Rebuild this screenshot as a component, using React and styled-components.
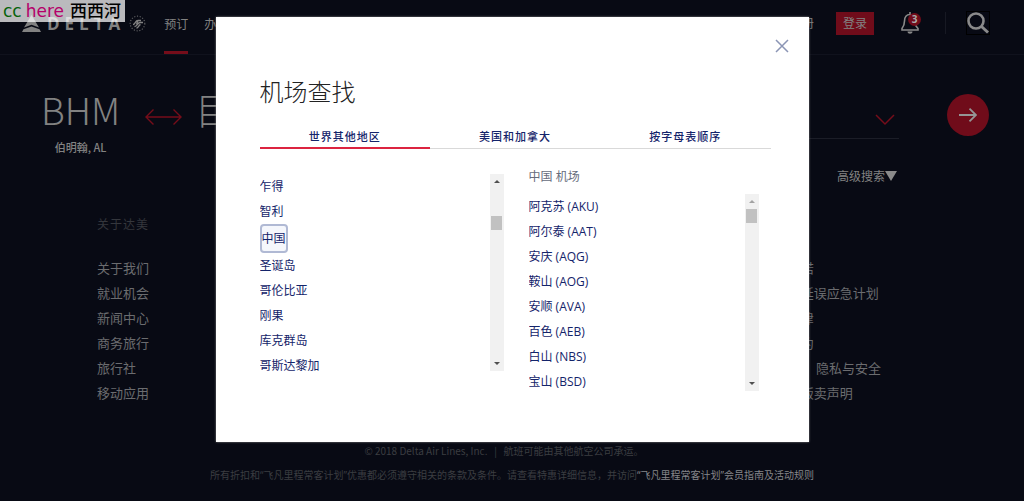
import React, { useState } from 'react'
import styled, { createGlobalStyle } from 'styled-components'

const cjk = '"Noto Sans CJK SC", sans-serif'

const countries = ['乍得', '智利', '中国', '圣诞岛', '哥伦比亚', '刚果', '库克群岛', '哥斯达黎加']

const airports = [
  '阿克苏 (AKU)',
  '阿尔泰 (AAT)',
  '安庆 (AQG)',
  '鞍山 (AOG)',
  '安顺 (AVA)',
  '百色 (AEB)',
  '白山 (NBS)',
  '宝山 (BSD)',
]

const tabs = ['世界其他地区', '美国和加拿大', '按字母表顺序']

const aboutLinks = ['关于我们', '就业机会', '新闻中心', '商务旅行', '旅行社', '移动应用']

const policyLinks = ['客户承诺', '停机坪延误应急计划', '相关法律', '运输合约', 'Cookie、隐私与安全', '反人口贩卖声明']

const GlobalStyle = createGlobalStyle`
  * {
    box-sizing: border-box;
  }
  body {
    margin: 0;
    background: #080a14;
    font-family: "Open Sans", ${cjk};
    font-size: 12px;
  }
  button {
    padding: 0;
    border: 0;
    background: none;
    color: inherit;
    font: inherit;
    cursor: pointer;
  }
  a {
    color: inherit;
    text-decoration: none;
  }
  ul {
    margin: 0;
    padding: 0;
    list-style: none;
  }
`

const Page = styled.div`
  position: relative;
  min-height: 100vh;
  overflow: hidden;
  color: #828282;
`

const Watermark = styled.div`
  position: absolute;
  top: 0;
  left: 0;
  z-index: 3;
  display: flex;
  align-items: center;
  gap: 6px;
  height: 22px;
  padding: 0 4px 0 3px;
  background: rgba(255, 255, 255, 0.72);
  font-family: "DejaVu Sans", ${cjk};
  font-size: 17px;
  line-height: 20px;
  color: #06630c;
  span {
    display: flex;
    gap: 4px;
  }
  em {
    font-style: normal;
    color: #b5006a;
  }
  b {
    font-weight: 500;
    color: #000;
  }
`

const Header = styled.header`
  display: flex;
  align-items: center;
  height: 55px;
  padding: 0 34px 8px 22px;
  border-bottom: 1px solid #10121d;
`

const Brand = styled.a`
  display: flex;
  align-items: center;
  font-family: "Open Sans", sans-serif;
  font-size: 17px;
  font-weight: 700;
  letter-spacing: 5px;
  span {
    margin: 0 4px 0 6px;
  }
`

const Nav = styled.nav`
  display: flex;
  flex: 1;
  align-self: flex-end;
  gap: 16px;
  margin-left: 18px;
`

const NavItem = styled.a`
  height: 46px;
  margin-bottom: -8px;
  line-height: 34px;
  border-bottom: 3px solid ${({ $active }) => ($active ? '#750d1a' : 'transparent')};
`

const HeaderTools = styled.div`
  display: flex;
  align-items: center;
`

const LoginButton = styled.button`
  width: 38px;
  height: 23px;
  margin: 0 27px 0 22px;
  background: #700c1a;
`

const BellButton = styled.button`
  position: relative;
  height: 24px;
  svg {
    display: block;
  }
  span {
    position: absolute;
    top: 2px;
    right: -2px;
    width: 13px;
    height: 13px;
    border-radius: 50%;
    background: #700c1a;
    color: #aaa;
    font-size: 10px;
    font-weight: 700;
    line-height: 13px;
  }
`

const SearchButton = styled.button`
  height: 24px;
  margin-left: 20px;
  border: 1px solid #000;
  svg {
    display: block;
  }
`

const Divider = styled.i`
  width: 1px;
  height: 22px;
  margin-left: 26px;
  background: #171923;
`

const Hero = styled.section`
  display: flex;
  justify-content: space-between;
  height: 145px;
  padding: 34px 35px 0 41px;
`

const Origin = styled.div`
  display: flex;
  gap: 25px;
`

const Code = styled.div`
  font-family: ${cjk};
  font-size: 37px;
  font-weight: 300;
  line-height: 40px;
  small {
    display: block;
    font-size: 11px;
    font-weight: 500;
    line-height: 36px;
    text-align: center;
  }
`

const SwapButton = styled.button`
  align-self: flex-start;
  margin-top: 20px;
  margin-right: -12px;
`

const TripSide = styled.div`
  display: flex;
  gap: 48px;
`

const DateField = styled.div`
  width: 220px;
  text-align: right;
`

const DateButton = styled.button`
  display: block;
  width: 100%;
  height: 50px;
  padding: 16px 4px 0;
  border-bottom: 1px solid #1b1d27;
  text-align: right;
`

const AdvancedSearch = styled.button`
  display: inline-flex;
  align-items: center;
  margin-top: 28px;
  padding-right: 2px;
`

const SubmitButton = styled.button`
  display: flex;
  align-items: center;
  justify-content: center;
  width: 42px;
  height: 42px;
  margin-top: 5px;
  border-radius: 50%;
  background: #700c1a;
`

const Footer = styled.footer`
  padding: 13px 0 12px;
`

const FooterColumns = styled.div`
  display: flex;
  justify-content: space-between;
  padding: 0 143px 0 97px;
`

const FooterColumn = styled.div`
  h4 {
    height: 24px;
    margin: 0 0 19px;
    color: #34363c;
    font-size: 12px;
    font-weight: 400;
    letter-spacing: 1px;
    line-height: 24px;
  }
  a {
    display: block;
    color: #6b6c6f;
    font-size: 13px;
    line-height: 25px;
  }
`

const Legal = styled.p`
  margin: 0;
  padding-right: ${({ $inset }) => ($inset ? '16px' : '0')};
  color: #3b3d41;
  font-family: ${({ $inset }) => ($inset ? '' : '"Open Sans",')} ${cjk};
  font-size: 10px;
  line-height: 25px;
  text-align: center;
  white-space: pre;
  &:first-of-type {
    margin-top: 32px;
  }
  a {
    color: #85868a;
  }
`

const Overlay = styled.div`
  position: absolute;
  inset: 0;
  z-index: 2;
  display: flex;
  align-items: flex-start;
  justify-content: center;
  padding-top: 17px;
`

const Dialog = styled.section`
  width: 593px;
  max-width: 100%;
  padding: 17px 38px 51px 44px;
  background: #fff;
  box-shadow: 0 0 2px #888;
  color: #14246a;
`

const CloseButton = styled.button`
  display: block;
  height: 24px;
  margin: 0 -18px 0 auto;
  svg {
    display: block;
  }
`

const Title = styled.h2`
  margin: 16px 0 0;
  color: #222;
  font-size: 24px;
  font-weight: 300;
  line-height: 36px;
`

const TabList = styled.div`
  display: grid;
  grid-template-columns: repeat(3, 1fr);
  margin-top: 14px;
  border-bottom: 1px solid #d9d9d9;
`

const Tab = styled.button`
  height: 25px;
  margin-bottom: -1px;
  border-bottom: 2px solid ${({ $active }) => ($active ? '#dc2440' : 'transparent')};
  font-size: 11px;
  font-weight: 500;
  letter-spacing: 1px;
`

const Columns = styled.div`
  display: grid;
  grid-template-columns: 244px 230px;
  gap: 25px;
`

const Column = styled.div`
  padding-top: ${({ $top }) => $top}px;
  h3 {
    margin: 0 0 5px;
    color: #666c7c;
    font-size: 12px;
    font-weight: 400;
    line-height: 24px;
  }
`

const ListBox = styled.div`
  display: flex;
  justify-content: space-between;
  height: 197px;
  overflow: hidden;
`

const Place = styled.button`
  display: block;
  line-height: 25px;
  white-space: nowrap;
  ${({ $selected }) =>
    $selected &&
    `
    border: 2px solid #b0b9d4;
    border-radius: 4px;
    background: #f5f7fc;
  `}
`

const Track = styled.div`
  display: flex;
  flex-direction: column;
  align-items: center;
  width: 14px;
  background: #f1f1f1;
  &::before,
  &::after {
    content: "";
    margin: 6px 0;
    border: 3px solid transparent;
  }
  &::before {
    border-top: 0;
    border-bottom-color: ${({ $atTop }) => ($atTop ? '#a3a3a3' : '#505050')};
  }
  &::after {
    margin-top: auto;
    border-bottom: 0;
    border-top-color: #505050;
  }
`

const Thumb = styled.div`
  width: 11px;
  height: 14px;
  margin-top: ${({ $offset }) => $offset}px;
  background: #c1c1c1;
`

const DeltaMark = () => (
  <svg width="19" height="17" viewBox="0 0 19 17" fill="currentColor">
    <path d="M9.500 0 17 12.500 9.500 9.800 2 12.500z" />
    <path d="M9.500 11.500 17.500 14.200 19 17H0l1.500-2.800z" />
  </svg>
)

const SkyTeamMark = () => (
  <svg width="17" height="17" viewBox="0 0 17 17" fill="none" stroke="currentColor">
    <circle cx="8.500" cy="8.500" r="7.300" strokeWidth="1.200" strokeDasharray="1.200 1.600" opacity="0.7" />
    <path d="M4 9.500C6.500 9.500 6 5.500 9 5.500h3M5.500 11.500c3 0 3-4 5.500-4h3M7.500 13c2 0 2-3 4-3.500M9 5.500l-1.500 4" strokeWidth="1.300" />
  </svg>
)

const Scrollbar = ({ offset, atTop }) => (
  <Track $atTop={atTop} aria-hidden="true">
    <Thumb $offset={offset} />
  </Track>
)

const AirportDialog = () => {
  const [tab, setTab] = useState(0)
  const [country, setCountry] = useState('中国')
  return (
    <Overlay>
      <Dialog role="dialog" aria-labelledby="airport-title">
        <CloseButton aria-label="关闭">
          <svg width="14" height="24" viewBox="0 0 14 24" stroke="#8b95b5" strokeWidth="1.500">
            <path d="M1 6l12 12M13 6L1 18" />
          </svg>
        </CloseButton>
        <Title id="airport-title">机场查找</Title>
        <TabList role="tablist">
          {tabs.map((name, i) => (
            <Tab key={name} role="tab" aria-selected={tab === i} $active={tab === i} onClick={() => setTab(i)}>
              {name}
            </Tab>
          ))}
        </TabList>
        <Columns>
          <Column $top={25}>
            <ListBox>
              <ul>
                {countries.map((name) => (
                  <li key={name}>
                    <Place $selected={country === name} onClick={() => setCountry(name)}>{name}</Place>
                  </li>
                ))}
              </ul>
              <Scrollbar offset={27} />
            </ListBox>
          </Column>
          <Column $top={16}>
            <h3>{country} 机场</h3>
            <ListBox>
              <ul>
                {airports.map((name) => (
                  <li key={name}>
                    <Place>{name}</Place>
                  </li>
                ))}
              </ul>
              <Scrollbar offset={0} atTop />
            </ListBox>
          </Column>
        </Columns>
      </Dialog>
    </Overlay>
  )
}

const App = () => {
  return (
    <Page>
      <GlobalStyle />
      <Watermark>
        <span>cc <em>here</em></span>
        <b>西西河</b>
      </Watermark>
      <Header>
        <Brand href="#">
          <DeltaMark />
          <span>DELTA</span>
          <SkyTeamMark />
        </Brand>
        <Nav>
          <NavItem href="#" $active>预订</NavItem>
          <NavItem href="#">办理登机手续</NavItem>
        </Nav>
        <HeaderTools>
          <a href="#">注册</a>
          <LoginButton>登录</LoginButton>
          <BellButton aria-label="通知">
            <svg width="18" height="24" viewBox="0 0 18 24" fill="none" stroke="#8a8a8a" strokeWidth="1.600">
              <path d="M1 19h16v-1.500l-2-2.500V9c0-4-2.500-5.500-6-5.500S3.500 6 3.500 10c0 3-.5 5-2.500 7.500zM9 3.500V1" />
              <path d="M6.500 20.500h5c0 3-5 3-5 0z" fill="#8a8a8a" stroke="none" />
            </svg>
            <span>3</span>
          </BellButton>
          <Divider />
          <SearchButton aria-label="搜索">
            <svg width="22" height="22" viewBox="0 0 22 22" fill="none" stroke="#8a8a8a">
              <circle cx="9" cy="9" r="7.500" strokeWidth="2.600" />
              <path d="M14.500 14.500l6.500 6" strokeWidth="3" />
            </svg>
          </SearchButton>
        </HeaderTools>
      </Header>
      <Hero>
        <Origin>
          <Code>
            BHM
            <small>伯明翰, AL</small>
          </Code>
          <SwapButton aria-label="交换">
            <svg width="37" height="16" viewBox="0 0 37 16" fill="none" stroke="#750d1a" strokeWidth="1.400">
              <path d="M1 8h35M8.500 .5L1 8l7.500 7.500M28.500 .5L36 8l-7.500 7.500" />
            </svg>
          </SwapButton>
          <Code>目的地</Code>
        </Origin>
        <TripSide>
          <DateField>
            <DateButton aria-label="日期">
              <svg width="20" height="12" viewBox="0 0 20 12" fill="none" stroke="#750d1a" strokeWidth="1.500">
                <path d="M1 1l9 9 9-9" />
              </svg>
            </DateButton>
            <AdvancedSearch>
              高级搜索
              <svg width="12" height="10" viewBox="0 0 12 10" fill="#8a8a8a">
                <path d="M0 0h12L6 10z" />
              </svg>
            </AdvancedSearch>
          </DateField>
          <SubmitButton aria-label="提交">
            <svg width="18" height="14" viewBox="0 0 18 14" fill="none" stroke="#959595" strokeWidth="1.800">
              <path d="M0 7h17M10.500 .7L17 7l-6.500 6.300" />
            </svg>
          </SubmitButton>
        </TripSide>
      </Hero>
      <Footer>
        <FooterColumns>
          <FooterColumn>
            <h4>关于达美</h4>
            {aboutLinks.map((name) => <a href="#" key={name}>{name}</a>)}
          </FooterColumn>
          <FooterColumn>
            <h4>政策</h4>
            {policyLinks.map((name) => <a href="#" key={name}>{name}</a>)}
          </FooterColumn>
        </FooterColumns>
        <Legal $inset>© 2018 Delta Air Lines, Inc.   |   航班可能由其他航空公司承运。</Legal>
        <Legal>
          所有折扣和“飞凡里程常客计划”优惠都必须遵守相关的条款及条件。请查看特惠详细信息，并访问<a href="#">“飞凡里程常客计划”会员指南及活动规则</a>
        </Legal>
      </Footer>
      <AirportDialog />
    </Page>
  )
}

export default App
